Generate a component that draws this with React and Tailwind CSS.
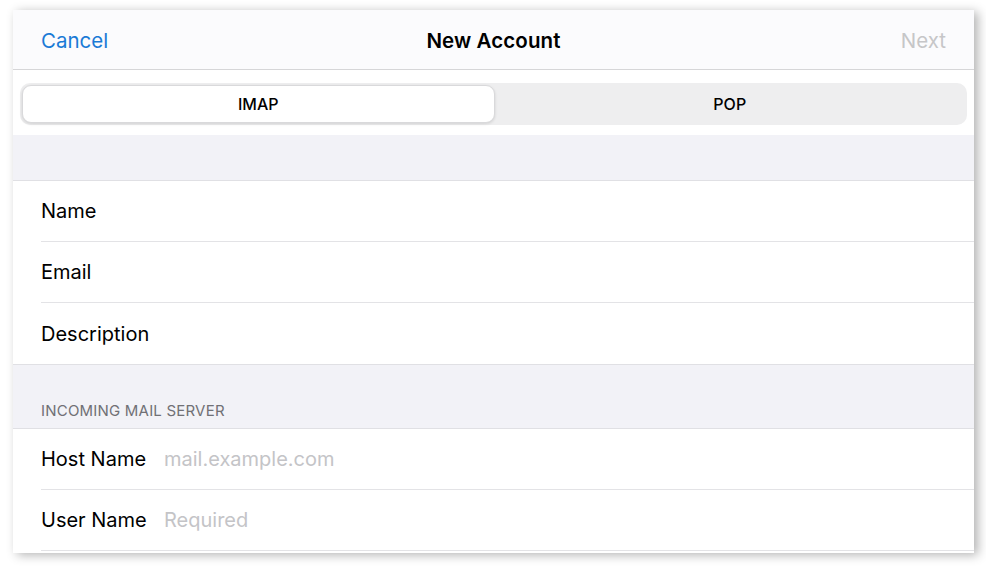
import { useState } from 'react'

const fields = ['Name', 'Email', 'Description']

const server = [
  { label: 'Host Name', placeholder: 'mail.example.com' },
  { label: 'User Name', placeholder: 'Required' },
]

export default function App() {
  const [mode, setMode] = useState('IMAP')

  return (
    <div
      className="w-[986px] h-[567px] bg-white overflow-hidden pt-[10px] pl-[13px]"
      style={{ fontFamily: 'Inter, "Noto Sans", sans-serif' }}
    >
      <div className="w-[961px] h-[543px] bg-white flex flex-col shadow-[4px_2px_10px_rgba(0,0,0,0.3)] overflow-hidden">
        {/* nav bar */}
        <div className="h-[60px] shrink-0 bg-[#fbfbfd] border-b border-[#d6d6d8] flex items-center justify-between px-[28px] pt-[4px]">
          <button className="text-[20.5px] text-[#1a7ad6] w-[80px] text-left">Cancel</button>
          <h1 className="text-[20.5px] font-semibold text-black tracking-[0.1px]">New Account</h1>
          <button className="text-[20.5px] text-[#c6c6c8] w-[80px] text-right">Next</button>
        </div>

        {/* segmented control */}
        <div className="pt-[13px] pb-[10px] px-[7px] shrink-0">
          <div className="h-[42px] bg-[#eeeeef] rounded-[10px] p-[2px] flex">
            {['IMAP', 'POP'].map((m) => (
              <button
                key={m}
                onClick={() => setMode(m)}
                className={
                  mode === m
                    ? 'flex-1 rounded-[9px] bg-white border border-[#d9d9db] shadow-[0_1px_3px_rgba(0,0,0,0.12)] text-[16px] font-medium text-black'
                    : 'flex-1 text-[16px] font-medium text-black'
                }
              >
                {m}
              </button>
            ))}
          </div>
        </div>

        <div className="h-[46px] shrink-0 bg-[#f2f2f7] border-b border-[#e0e0e4]" />

        {fields.map((f, i) => (
          <div key={f} className="h-[61px] shrink-0 pl-[28px]">
            <div
              className={
                i < fields.length - 1
                  ? 'h-full flex items-center border-b border-[#e3e3e6]'
                  : 'h-full flex items-center'
              }
            >
              <span className="text-[20px] text-black">{f}</span>
            </div>
          </div>
        ))}

        <div className="h-[65px] shrink-0 bg-[#f2f2f7] border-t border-b border-[#e0e0e4] flex items-end pl-[28px] pb-[6px]">
          <span className="text-[15px] text-[#707075] tracking-[0.2px]">INCOMING MAIL SERVER</span>
        </div>

        {server.map((s) => (
          <div key={s.label} className="h-[61px] shrink-0 pl-[28px]">
            <div className="h-full flex items-center border-b border-[#e3e3e6]">
              <span className="text-[20px] text-black w-[123px]">{s.label}</span>
              <span className="text-[20px] text-[#c4c4c7]">{s.placeholder}</span>
            </div>
          </div>
        ))}
      </div>
    </div>
  )
}
